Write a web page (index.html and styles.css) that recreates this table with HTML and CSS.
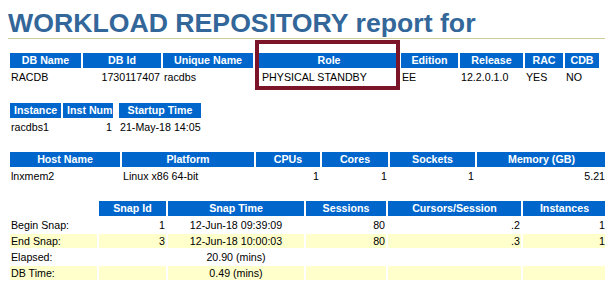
FILE: index.html
```html
<!DOCTYPE html>
<html>
<head>
<meta charset="utf-8">
<title>AWR Report</title>
<link rel="stylesheet" href="styles.css">
</head>
<body class="awr">
<h1 class="awr">WORKLOAD REPOSITORY report for</h1>

<div class="t1-wrap">
<table class="tdiff t1">
<colgroup><col class="w71"><col class="w78"><col class="w90"><col class="w2"><col class="w140"><col class="w57"><col class="w63"><col class="w38"><col class="w34"></colgroup>
<tr><th class="awrbg">DB Name</th><th class="awrbg">DB Id</th><th class="awrbg">Unique Name</th><th class="sp"></th><th class="awrbg">Role</th><th class="awrbg">Edition</th><th class="awrbg">Release</th><th class="awrbg">RAC</th><th class="awrbg">CDB</th></tr>
<tr><td class="awrnc">RACDB</td><td class="awrnc num">1730117407</td><td class="awrnc">racdbs</td><td class="sp"></td><td class="awrnc role">PHYSICAL STANDBY</td><td class="awrnc">EE</td><td class="awrnc">12.2.0.1.0</td><td class="awrnc">YES</td><td class="awrnc">NO</td></tr>
</table>
<div class="highlight"></div>
</div>

<table class="tdiff t2">
<colgroup><col class="w51"><col class="w50"><col class="w2"><col class="w82"></colgroup>
<tr><th class="awrbg">Instance</th><th class="awrbg">Inst Num</th><th class="sp"></th><th class="awrbg">Startup Time</th></tr>
<tr><td class="awrnc">racdbs1</td><td class="awrnc num">1</td><td class="sp"></td><td class="awrnc">21-May-18 14:05</td></tr>
</table>

<table class="tdiff t3">
<colgroup><col class="w110"><col class="w132"><col class="w64"><col class="w66"><col class="w85"><col class="w129"></colgroup>
<tr><th class="awrbg">Host Name</th><th class="awrbg">Platform</th><th class="awrbg">CPUs</th><th class="awrbg">Cores</th><th class="awrbg">Sockets</th><th class="awrbg">Memory (GB)</th></tr>
<tr><td class="awrnc">lnxmem2</td><td class="awrnc">Linux x86 64-bit</td><td class="awrnc num">1</td><td class="awrnc num">1</td><td class="awrnc num">1</td><td class="awrnc num">5.21</td></tr>
</table>

<table class="tdiff t4">
<colgroup><col class="w87"><col class="w67"><col class="w136"><col class="w80"><col class="w133"><col class="w83"></colgroup>
<tr><th class="awrnobg"></th><th class="awrbg">Snap Id</th><th class="awrbg">Snap Time</th><th class="awrbg">Sessions</th><th class="awrbg">Cursors/Session</th><th class="awrbg">Instances</th></tr>
<tr><td class="awrnc">Begin Snap:</td><td class="awrnc num">1</td><td class="awrnc ctr">12-Jun-18 09:39:09</td><td class="awrnc num">80</td><td class="awrnc num">.2</td><td class="awrnc num">1</td></tr>
<tr><td class="awrc">End Snap:</td><td class="awrc num">3</td><td class="awrc ctr">12-Jun-18 10:00:03</td><td class="awrc num">80</td><td class="awrc num">.3</td><td class="awrc num">1</td></tr>
<tr><td class="awrnc">Elapsed:</td><td class="awrnc"></td><td class="awrnc ctr">20.90 (mins)</td><td class="awrnc"></td><td class="awrnc"></td><td class="awrnc"></td></tr>
<tr><td class="awrc">DB Time:</td><td class="awrc"></td><td class="awrc ctr">0.49 (mins)</td><td class="awrc"></td><td class="awrc"></td><td class="awrc"></td></tr>
</table>
</body>
</html>
```

FILE: styles.css
```css
body.awr {
  margin: 8px;
  font: bold 10pt "Liberation Sans", Arial, Helvetica, sans-serif;
  color: #000;
  background: #fff;
}

h1.awr {
  font: bold 20pt/30px "Liberation Sans", Arial, Helvetica, sans-serif;
  color: #336699;
  background: #fff;
  border-bottom: 1px solid #cccc99;
  margin: 0;
  padding: 0;
  white-space: nowrap;
}

.t1-wrap {
  position: relative;
  margin-top: 12px;
}

table.tdiff {
  border-collapse: separate;
  border-spacing: 2px;
  table-layout: fixed;
}

.t1 { width: 593px; }
.t2 { width: 195px; margin-top: 15px; }
.t3 { width: 600px; margin-top: 14px; }
.t4 { width: 600px; margin-top: 14px; }

th, td {
  box-sizing: border-box;
  font-family: "Liberation Sans", Arial, Helvetica, sans-serif;
  font-size: 8pt;
  line-height: 12px;
  white-space: nowrap;
  overflow: hidden;
}

th.awrbg {
  font-weight: bold;
  color: #fff;
  background: #0066cc;
  padding: 1px 4px 2px;
  text-align: center;
}

th.awrnobg {
  background: #fff;
  padding: 1px 4px 2px;
}

td.awrnc,
td.awrc {
  font-weight: normal;
  color: #000;
  background: #fff;
  padding: 1px;
  vertical-align: top;
  height: 14px;
}

td.awrc { background: #ffffcc; }

td.role { padding-left: 3px; }

th.sp, td.sp {
  padding: 0;
  background: transparent;
}

.num { text-align: right; }
.ctr { text-align: center; }

.highlight {
  position: absolute;
  left: 247px;
  top: -11px;
  width: 145px;
  height: 50px;
  box-sizing: border-box;
  border: 4px solid #7b1428;
}

.w2 { width: 2px; }
.w34 { width: 34px; }
.w38 { width: 38px; }
.w50 { width: 50px; }
.w51 { width: 51px; }
.w57 { width: 57px; }
.w63 { width: 63px; }
.w64 { width: 64px; }
.w66 { width: 66px; }
.w67 { width: 67px; }
.w71 { width: 71px; }
.w78 { width: 78px; }
.w80 { width: 80px; }
.w82 { width: 82px; }
.w83 { width: 83px; }
.w85 { width: 85px; }
.w87 { width: 87px; }
.w90 { width: 90px; }
.w110 { width: 110px; }
.w129 { width: 129px; }
.w132 { width: 132px; }
.w133 { width: 133px; }
.w136 { width: 136px; }
.w140 { width: 140px; }
```
